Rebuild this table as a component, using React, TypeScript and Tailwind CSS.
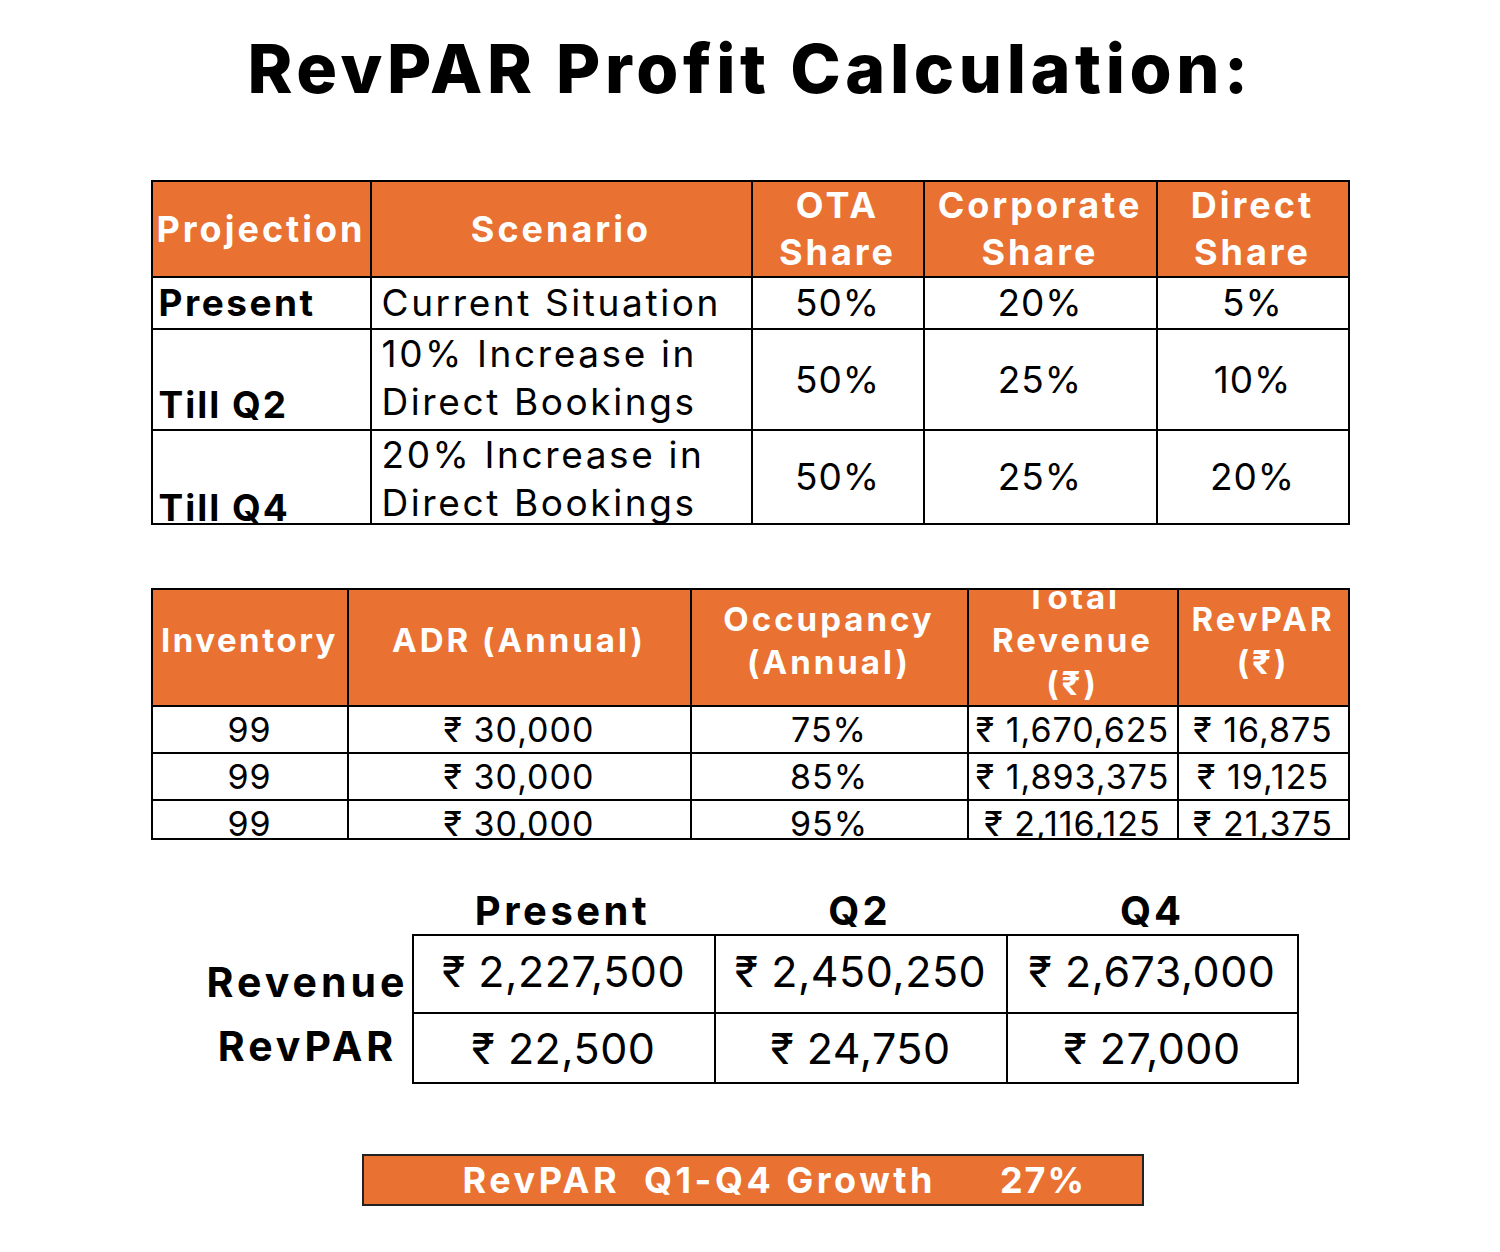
import React from "react";

const F = { fontFamily: 'Inter, "Noto Sans", "DejaVu Sans", sans-serif' };

function H({ children, cls = "" }: { children: React.ReactNode; cls?: string }) {
  return (
    <div className={"bg-[#E97132] text-white font-bold flex items-center justify-center text-center overflow-hidden whitespace-nowrap " + cls}>
      <div>{children}</div>
    </div>
  );
}

function C({ children, cls = "" }: { children: React.ReactNode; cls?: string }) {
  return <div className={"bg-white text-black flex overflow-hidden whitespace-nowrap " + cls}>{children}</div>;
}

export default function App() {
  return (
    <div style={F} className="w-[1500px] h-[1252px] bg-white flex flex-col items-center text-black">
      <h1 className="mt-[28px] h-[80px] leading-[80px] text-[68px] font-extrabold tracking-[4.6px]">RevPAR Profit Calculation:</h1>

      {/* Table 1 */}
      <div className="mt-[72px] w-[1199px] grid grid-cols-[217px_379px_170px_231px_190px] grid-rows-[94px_50px_99px_92px] gap-[2px] bg-black p-[2px]">
        <H cls="text-[36px] leading-[47px] tracking-[3px]">Projection</H>
        <H cls="text-[36px] leading-[47px] tracking-[3px]">Scenario</H>
        <H cls="text-[36px] leading-[47px] tracking-[3px]">OTA<br />Share</H>
        <H cls="text-[36px] leading-[47px] tracking-[3px]">Corporate<br />Share</H>
        <H cls="text-[36px] leading-[47px] tracking-[3px]">Direct<br />Share</H>

        <C cls="items-center pl-[6px] text-[37px] font-bold tracking-[2.5px]">Present</C>
        <C cls="items-center pl-[10px] text-[37px] tracking-[2.6px]">Current Situation</C>
        <C cls="items-center justify-center text-[37px] tracking-[1px]">50%</C>
        <C cls="items-center justify-center text-[37px] tracking-[1px]">20%</C>
        <C cls="items-center justify-center text-[37px] tracking-[1px]">5%</C>

        <C cls="items-end pl-[6px] text-[37px] font-bold leading-[48px] tracking-[2px]">Till Q2</C>
        <C cls="items-start pl-[10px] text-[37px] leading-[48px] tracking-[2.6px]"><div>10% Increase in<br />Direct Bookings</div></C>
        <C cls="items-center justify-center text-[37px] tracking-[1px]">50%</C>
        <C cls="items-center justify-center text-[37px] tracking-[1px]">25%</C>
        <C cls="items-center justify-center text-[37px] tracking-[1px]">10%</C>

        <C cls="items-end pl-[6px] text-[37px] font-bold leading-[48px] tracking-[2px]"><div className="translate-y-[9px]">Till Q4</div></C>
        <C cls="items-start pl-[10px] text-[37px] leading-[48px] tracking-[2.6px]"><div>20% Increase in<br />Direct Bookings</div></C>
        <C cls="items-center justify-center text-[37px] tracking-[1px]">50%</C>
        <C cls="items-center justify-center text-[37px] tracking-[1px]">25%</C>
        <C cls="items-center justify-center text-[37px] tracking-[1px]">20%</C>
      </div>

      {/* Table 2 */}
      <div className="mt-[63px] w-[1199px] grid grid-cols-[194px_341px_275px_208px_169px] grid-rows-[115px_45px_45px_37px] gap-[2px] bg-black p-[2px]">
        <H cls="text-[33px] leading-[43px] pb-[14px] tracking-[2.5px]">Inventory</H>
        <H cls="text-[33px] leading-[43px] pb-[14px] tracking-[3px]">ADR (Annual)</H>
        <H cls="text-[33px] leading-[43px] pb-[14px] tracking-[3px]">Occupancy<br />(Annual)</H>
        <H cls="text-[33px] leading-[43px] pb-[14px] tracking-[3px]">Total<br />Revenue<br />(₹)</H>
        <H cls="text-[33px] leading-[43px] pb-[14px] tracking-[3px]">RevPAR<br />(₹)</H>

        {[
          ["99", "₹ 30,000", "75%", "₹ 1,670,625", "₹ 16,875"],
          ["99", "₹ 30,000", "85%", "₹ 1,893,375", "₹ 19,125"],
          ["99", "₹ 30,000", "95%", "₹ 2,116,125", "₹ 21,375"],
        ].map((r, i) =>
          r.map((v, j) => (
            <C key={i + "-" + j} cls="items-start justify-center text-[34px] leading-[45px] tracking-[1px]">
              {v}
            </C>
          ))
        )}
      </div>

      {/* Table 3 */}
      <div className="mt-[44px] w-[1199px] flex">
        <div className="ml-[53px] w-[208px] flex flex-col pt-[50px]">
          <div className="h-[78px] pt-[20px] flex items-center justify-center text-[41px] font-bold tracking-[4px]">Revenue</div>
          <div className="h-[70px] flex items-center justify-center text-[41px] font-bold tracking-[4px]">RevPAR</div>
        </div>
        <div className="flex flex-col">
          <div className="h-[50px] grid grid-cols-[302px_292px_293px] items-end">
            <div className="text-center text-[40px] font-bold leading-[46px] tracking-[3.5px]">Present</div>
            <div className="text-center text-[40px] font-bold leading-[46px] tracking-[3px]">Q2</div>
            <div className="text-center text-[40px] font-bold leading-[46px] tracking-[3px]">Q4</div>
          </div>
          <div className="w-[887px] grid grid-cols-[300px_290px_289px] grid-rows-[76px_68px] gap-[2px] bg-black p-[2px]">
            {["₹ 2,227,500", "₹ 2,450,250", "₹ 2,673,000"].map((v) => (
              <C key={v} cls="items-center justify-center text-[43px] pb-[6px] tracking-[0.5px]">{v}</C>
            ))}
            {["₹ 22,500", "₹ 24,750", "₹ 27,000"].map((v) => (
              <C key={v} cls="items-center justify-center text-[43px] tracking-[0.5px]">{v}</C>
            ))}
          </div>
        </div>
      </div>

      {/* Banner */}
      <div className="mt-[70px] w-[1199px] flex">
        <div className="ml-[211px] w-[782px] h-[52px] bg-[#E97132] border-[2px] border-[#222] flex items-center text-white font-bold text-[36px] whitespace-nowrap">
          <span className="ml-[99px] tracking-[3.5px]">RevPAR&nbsp; Q1-Q4 Growth</span>
          <span className="ml-[64px] tracking-[2px]">27%</span>
        </div>
      </div>
    </div>
  );
}
